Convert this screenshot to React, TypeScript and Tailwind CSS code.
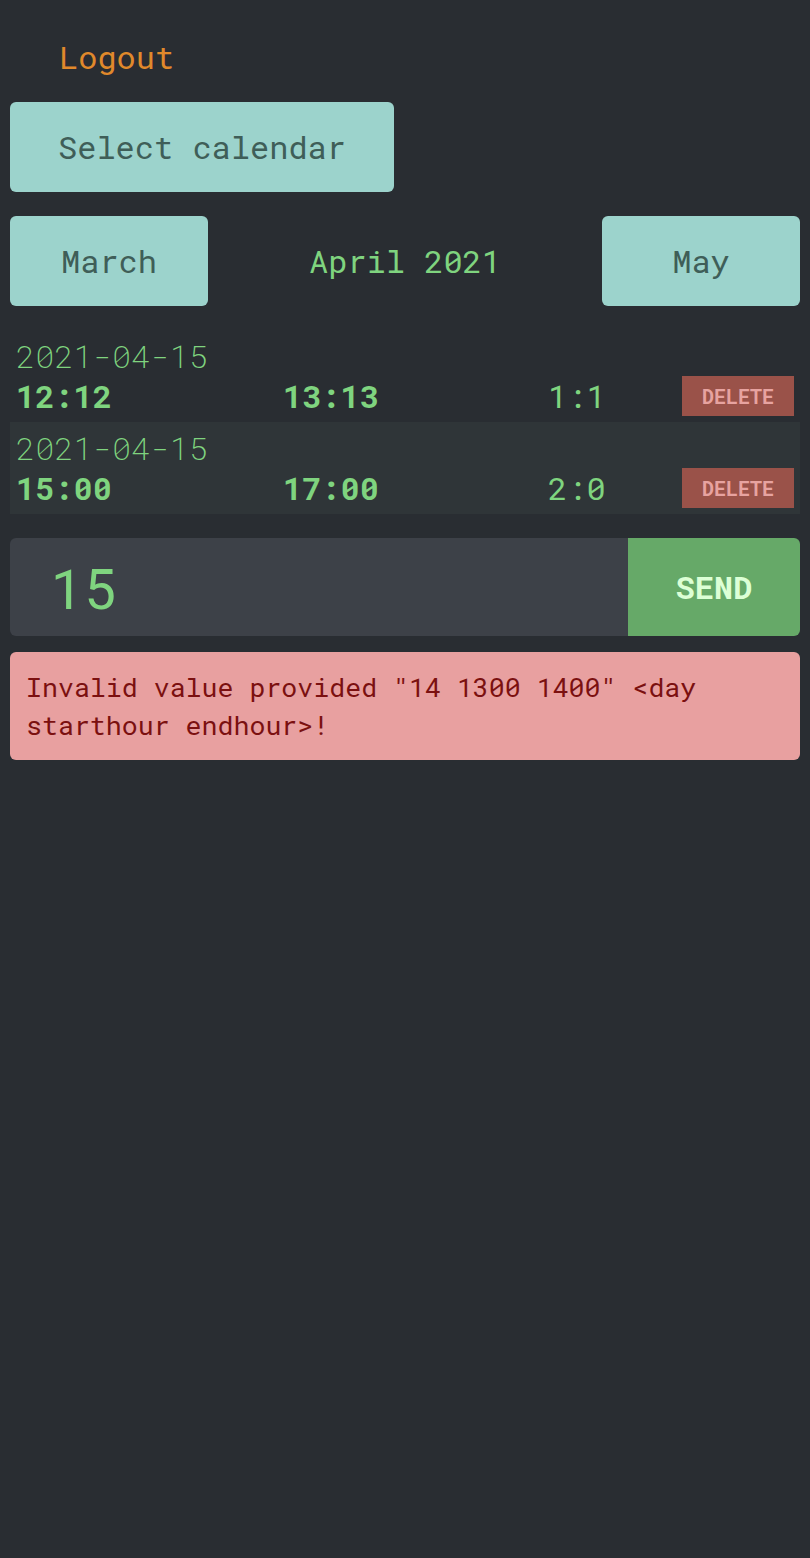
import React from "react";

const mono = "font-['Roboto_Mono','DejaVu_Sans_Mono',monospace]";

type Entry = { date: string; start: string; end: string; len: string };

const entries: Entry[] = [
  { date: "2021-04-15", start: "12:12", end: "13:13", len: "1:1" },
  { date: "2021-04-15", start: "15:00", end: "17:00", len: "2:0" },
];

function EntryRow({ entry, shaded }: { entry: Entry; shaded: boolean }) {
  return (
    <div className={`p-[6px] ${shaded ? "bg-[#2f3538]" : ""}`}>
      <div className="h-[40px] flex items-center text-[32px] font-extralight text-[#7fd47f] leading-none">
        {entry.date}
      </div>
      <div className="h-[40px] flex items-center text-[32px] font-bold text-[#7fd47f] leading-none">
        <span className="w-[267px]">{entry.start}</span>
        <span className="w-[265px]">{entry.end}</span>
        <span className="w-[134px] font-normal">{entry.len}</span>
        <button className="w-[112px] h-[40px] bg-[#9a5249] text-[#e7a3a0] text-[20px] font-bold flex items-center justify-center">
          DELETE
        </button>
      </div>
    </div>
  );
}

export default function App() {
  return (
    <div className={`min-h-[1558px] bg-[#292d32] px-[10px] pt-[10px] ${mono}`}>
      {/* Header */}
      <div className="h-[92px] flex items-center pl-[49px] pt-[2px] text-[32px] text-[#e0892b]">
        Logout
      </div>
      <button className="w-[384px] h-[90px] rounded-[6px] bg-[#9cd3cc] text-[#3f5e58] text-[32px] flex items-center justify-center">
        Select calendar
      </button>

      {/* Month switcher */}
      <div className="mt-6 flex items-center justify-between">
        <button className="w-[198px] h-[90px] rounded-[6px] bg-[#9cd3cc] text-[#3f5e58] text-[32px] flex items-center justify-center">
          March
        </button>
        <div className="text-[32px] text-[#7fd47f]">April 2021</div>
        <button className="w-[198px] h-[90px] rounded-[6px] bg-[#9cd3cc] text-[#3f5e58] text-[32px] flex items-center justify-center">
          May
        </button>
      </div>

      {/* Entries */}
      <div className="mt-6">
        {entries.map((e, i) => (
          <EntryRow key={i} entry={e} shaded={i % 2 === 1} />
        ))}
      </div>

      {/* Input */}
      <div className="mt-6 h-[98px] flex rounded-[6px] overflow-hidden">
        <div className="flex-1 bg-[#3d4148] flex items-center pl-[40px] text-[56px] text-[#7fd47f]">
          15
        </div>
        <button className="w-[172px] bg-[#66a968] text-[#dcffd5] text-[32px] font-bold flex items-center justify-center">
          SEND
        </button>
      </div>

      {/* Error */}
      <div className="mt-4 rounded-[6px] bg-[#e8a0a0] p-4 text-[26.6px] leading-[38px] text-[#7b1010]">
        Invalid value provided "14 1300 1400" &lt;day starthour endhour&gt;!
      </div>
    </div>
  );
}
